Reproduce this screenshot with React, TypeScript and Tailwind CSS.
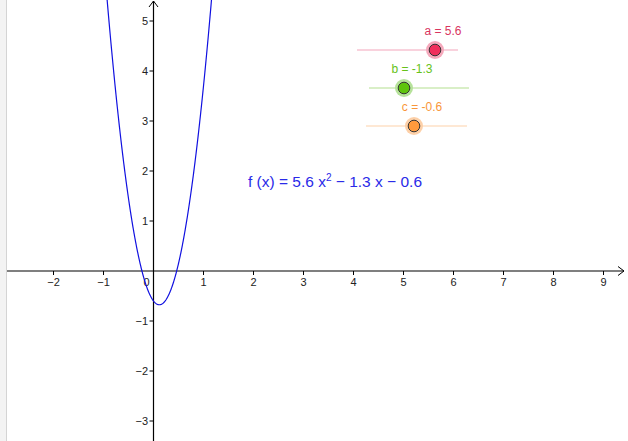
const OX = 153.5;
const OY = 271;
const S = 50;

const f = (x: number) => 5.6 * x * x - 1.3 * x - 0.6;

const curve = (() => {
  const pts: string[] = [];
  for (let x = -1.0; x <= 1.25; x += 0.005) {
    pts.push(`${(OX + S * x).toFixed(2)},${(OY - S * f(x)).toFixed(2)}`);
  }
  return 'M' + pts.join(' L');
})();

const xTicks = [-2, -1, 1, 2, 3, 4, 5, 6, 7, 8, 9];
const yTicks = [5, 4, 3, 2, 1, -1, -2, -3];

const sliders = [
  { name: 'a = 5.6', x1: 357, x2: 458, y: 50, px: 435, text: '#d9365f', fill: '#f0305c', halo: '#f5a9bc', line: '#f3a6bb' },
  { name: 'b = -1.3', x1: 369, x2: 469, y: 88, px: 404, text: '#66c21a', fill: '#5ec40c', halo: '#b6e29a', line: '#b4e08f' },
  { name: 'c = -0.6', x1: 366, x2: 467, y: 126, px: 414, text: '#f9963a', fill: '#ff9a3c', halo: '#fdd0a8', line: '#fdd2a9' },
];

const minus = (n: number) => (n < 0 ? `\u2212${-n}` : `${n}`);

const App = () => {
  return (
    <div className="flex w-[628px] h-[441px] bg-white overflow-hidden font-['Liberation_Sans',Arial,sans-serif]">
      {/* side bar edge */}
      <div className="w-[7px] h-full bg-[#f3f3f3] border-r border-[#d4d4d4]" />
      <svg width={621} height={441} viewBox="7 0 621 441" className="block">
        {/* axes */}
        <line x1={7} y1={OY} x2={624} y2={OY} stroke="#000" strokeWidth={1.2} />
        <polyline points={`618,${OY - 4.5} 624,${OY} 618,${OY + 4.5}`} fill="none" stroke="#000" strokeWidth={1} />
        <line x1={OX} y1={441} x2={OX} y2={1} stroke="#000" strokeWidth={1.2} />
        <polyline points={`${OX - 4.5},7 ${OX},1 ${OX + 4.5},7`} fill="none" stroke="#000" strokeWidth={1} />

        {xTicks.map((n) => (
          <g key={`x${n}`}>
            <line x1={OX + S * n} y1={OY} x2={OX + S * n} y2={OY + 4} stroke="#000" strokeWidth={1} />
            <text x={OX + S * n} y={OY + 15} fontSize={11} fill="#222" textAnchor="middle">
              {minus(n)}
            </text>
          </g>
        ))}
        <text x={OX - 7} y={OY + 15} fontSize={11} fill="#222" textAnchor="middle">
          0
        </text>

        {yTicks.map((n) => (
          <g key={`y${n}`}>
            <line x1={OX - 4} y1={OY - S * n} x2={OX} y2={OY - S * n} stroke="#000" strokeWidth={1} />
            <text x={OX - 5.5} y={OY - S * n + 4} fontSize={11} fill="#222" textAnchor="end">
              {minus(n)}
            </text>
          </g>
        ))}

        {/* graph */}
        <path d={curve} fill="none" stroke="#1010e0" strokeWidth={1.2} />

        {/* sliders */}
        {sliders.map((s) => (
          <g key={s.name}>
            <line x1={s.x1} y1={s.y} x2={s.x2} y2={s.y} stroke={s.line} strokeWidth={1.2} />
            <circle cx={s.px} cy={s.y} r={9} fill={s.halo} />
            <circle cx={s.px} cy={s.y} r={5.8} fill={s.fill} stroke="#333" strokeWidth={1} />
            <text x={s.px + 8} y={s.y - 15} fontSize={12} fill={s.text} textAnchor="middle">
              {s.name}
            </text>
          </g>
        ))}

        {/* function label */}
        <text x={248} y={187} fontSize={15.5} fill="#2a2ae8">
          f (x) = 5.6 x<tspan fontSize={10} dy={-6}>2</tspan>
          <tspan dy={6}> − 1.3 x − 0.6</tspan>
        </text>
      </svg>
    </div>
  );
};

export default App;
